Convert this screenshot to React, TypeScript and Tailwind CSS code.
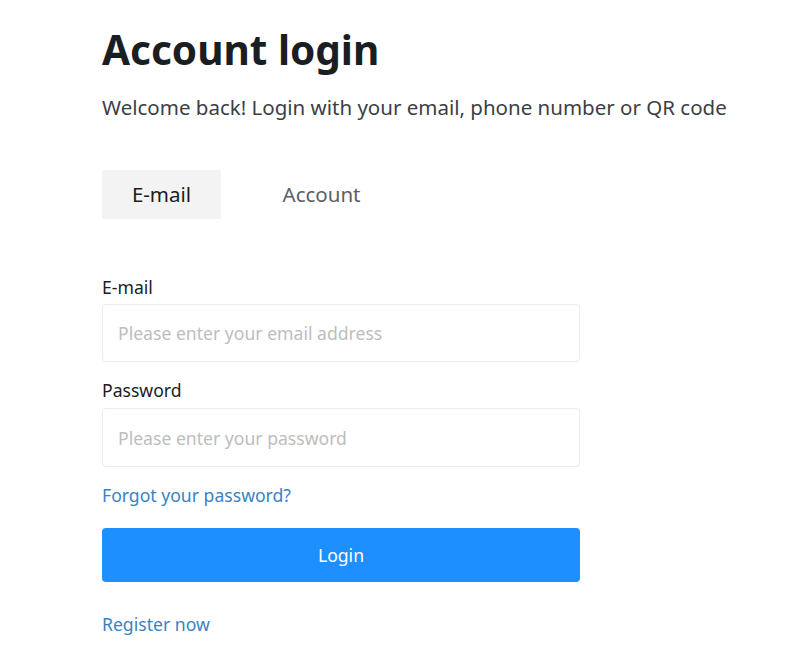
import { useState } from "react";

const TABS = ["E-mail", "Account"] as const;

export default function App() {
  const [tab, setTab] = useState(0);

  return (
    <div className="min-h-[660px] w-[800px] bg-white font-['Noto_Sans',sans-serif] text-[#1f2329]">
      <div className="pl-[102px] pt-[22px]">
        <h1 className="text-[40.5px] font-bold leading-[56px] text-[#1a1d22]">Account login</h1>
        <p className="mt-[15px] text-[20.5px] leading-[28px] text-[#3b3f45]">
          Welcome back! Login with your email, phone number or QR code
        </p>

        {/* Tabs */}
        <div className="mt-[49px] flex gap-[41px]">
          {TABS.map((t, idx) => (
            <button
              key={t}
              onClick={() => setTab(idx)}
              className={`h-[49px] w-[119px] rounded-[2px] text-[20.5px] ${
                tab === idx ? "bg-[#f3f3f3] text-[#1a1d22]" : "bg-transparent text-[#5a5f66]"
              }`}
            >
              {t}
            </button>
          ))}
        </div>

        {/* Form */}
        <div className="mt-[56px] w-[478px]">
          <label className="block text-[17.6px] leading-[24px] text-[#1a1d22]">E-mail</label>
          <input
            className="mt-[5px] h-[58px] w-full rounded-[4px] border border-[#ececec] px-[15px] text-[17.6px] outline-none placeholder:text-[#bdbdbd]"
            placeholder="Please enter your email address"
          />
          <label className="mt-[16px] block text-[17.6px] leading-[24px] text-[#1a1d22]">Password</label>
          <input
            type="password"
            className="mt-[6px] h-[59px] w-full rounded-[4px] border border-[#ececec] px-[15px] text-[17.6px] outline-none placeholder:text-[#bdbdbd]"
            placeholder="Please enter your password"
          />
          <a href="#" className="mt-[15px] block text-[17.6px] leading-[26px] text-[#3a82c4]">
            Forgot your password?
          </a>
          <button className="mt-[20px] h-[54px] w-full rounded-[4px] bg-[#1e8fff] text-[17.6px] text-white">
            Login
          </button>
          <a href="#" className="mt-[29px] block text-[17.6px] leading-[26px] text-[#3a82c4]">
            Register now
          </a>
        </div>
      </div>
    </div>
  );
}
